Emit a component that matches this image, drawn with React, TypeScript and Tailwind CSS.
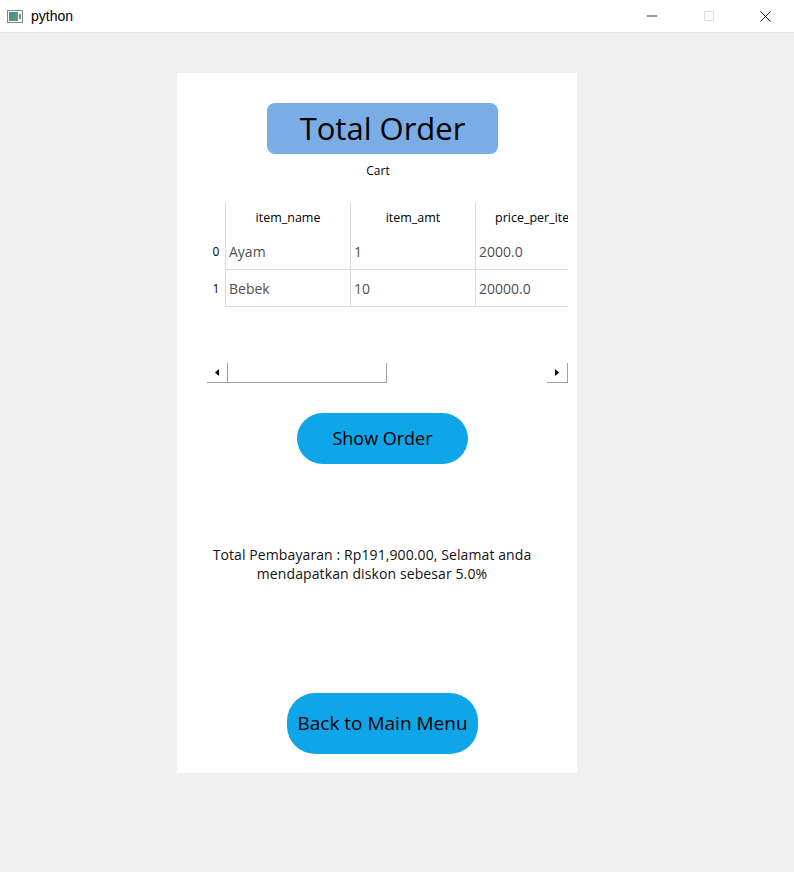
import { Minus, Square, X } from 'lucide-react';

const rows = [
  { idx: '0', name: 'Ayam', amt: '1', price: '2000.0' },
  { idx: '1', name: 'Bebek', amt: '10', price: '20000.0' },
];

function TitleBar() {
  return (
    <div className="h-[33px] bg-white flex items-center border-b border-[#e6e6e6]">
      <div className="ml-[7px] w-[16px] h-[13px] border border-[#7a8a96] bg-white flex items-center px-[1px]">
        <div className="w-[9px] h-[9px] bg-gradient-to-br from-[#3f8a9b] to-[#5aa36b]"></div>
        <div className="ml-[1px] w-[2px] h-[5px] bg-[#7a8a96]"></div>
      </div>
      <span className="ml-[8px] text-[14px] text-black font-['Liberation_Sans',sans-serif]">python</span>
      <div className="ml-auto flex items-center h-full">
        <div className="w-[57px] h-full flex items-center justify-center">
          <Minus size={16} strokeWidth={1.2} className="text-black" />
        </div>
        <div className="w-[57px] h-full flex items-center justify-center">
          <Square size={12} strokeWidth={1.2} className="text-[#c4c4c4]" />
        </div>
        <div className="w-[57px] h-full flex items-center justify-center">
          <X size={19} strokeWidth={1.1} className="text-black" />
        </div>
      </div>
    </div>
  );
}

function Table() {
  return (
    <div className="ml-[30px] w-[361px] overflow-hidden font-['Open_Sans',sans-serif]">
      <div className="flex h-[30px] text-[12.5px] text-black">
        <div className="w-[18px] shrink-0"></div>
        <div className="w-[125px] shrink-0 border-l border-[#dcdcdc] flex items-center justify-center">item_name</div>
        <div className="w-[125px] shrink-0 border-l border-[#dcdcdc] flex items-center justify-center">item_amt</div>
        <div className="w-[125px] shrink-0 border-l border-[#dcdcdc] flex items-center justify-center whitespace-nowrap">price_per_item</div>
      </div>
      {rows.map((r) => (
        <div key={r.idx} className="flex h-[37px] text-[14px] text-[#505050]">
          <div className="w-[18px] shrink-0 flex items-center justify-center text-[12px] text-black">{r.idx}</div>
          <div className="w-[125px] shrink-0 border-l border-b border-[#dcdcdc] flex items-center pl-[3px]">{r.name}</div>
          <div className="w-[125px] shrink-0 border-l border-b border-[#dcdcdc] flex items-center pl-[3px]">{r.amt}</div>
          <div className="w-[125px] shrink-0 border-l border-b border-[#dcdcdc] flex items-center pl-[3px]">{r.price}</div>
        </div>
      ))}
    </div>
  );
}

function ScrollBar() {
  return (
    <div className="ml-[30px] mt-[56px] w-[361px] h-[20px] flex">
      <div className="w-[20px] h-full border-b border-[#a0a0a0] flex items-center justify-center">
        <svg width="4" height="7" viewBox="0 0 4 7"><path d="M4 0 L0 3.5 L4 7 Z" fill="#000" /></svg>
      </div>
      <div className="w-[160px] h-full border-l border-r border-b border-[#a0a0a0]"></div>
      <div className="flex-1"></div>
      <div className="w-[21px] h-full border-r border-b border-[#a0a0a0] flex items-center justify-center">
        <svg width="4" height="7" viewBox="0 0 4 7"><path d="M0 0 L4 3.5 L0 7 Z" fill="#000" /></svg>
      </div>
    </div>
  );
}

export default function App() {
  return (
    <div className="w-[794px] h-[872px] bg-[#f0f0f0] font-['Open_Sans',sans-serif]">
      <TitleBar />
      <div className="ml-[177px] mt-[40px] w-[400px] h-[700px] bg-white flex flex-col">
        <div className="mt-[30px] ml-[90px] w-[231px] h-[51px] rounded-[8px] bg-[#7aace6] flex items-center justify-center text-[31px] text-black">
          Total Order
        </div>
        <div className="mt-[9px] ml-[2px] text-center text-[12px] text-black leading-[16px]">Cart</div>
        <div className="mt-[24px]">
          <Table />
        </div>
        <ScrollBar />
        <div className="mt-[30px] ml-[120px] w-[171px] h-[51px] rounded-full bg-[#0fa6e9] flex items-center justify-center text-[18px] text-black">
          Show Order
        </div>
        <div className="mt-[81px] pl-[10px] pr-[20px] text-center text-[14px] tracking-[0.1px] leading-[19px] text-[#111]">
          Total Pembayaran : Rp191,900.00, Selamat anda<br />mendapatkan diskon sebesar 5.0%
        </div>
        <div className="mt-[110px] ml-[110px] w-[191px] h-[61px] rounded-[28px] bg-[#0fa6e9] flex items-center justify-center text-[19px] text-black">
          Back to Main Menu
        </div>
      </div>
    </div>
  );
}
